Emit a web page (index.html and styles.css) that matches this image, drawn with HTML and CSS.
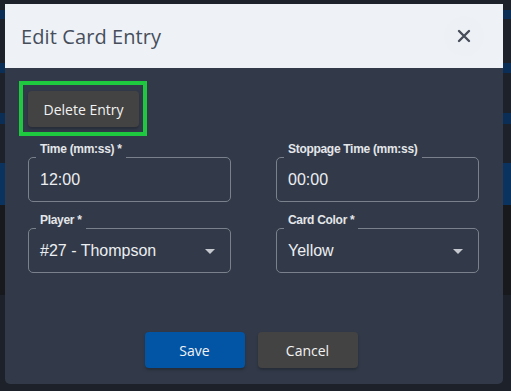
FILE: index.html
```html
<!DOCTYPE html>
<html>
<head>
<meta charset="utf-8">
<link rel="stylesheet" href="styles.css">
</head>
<body>
<div class="backdrop">
  <div class="modal">
    <div class="modal-header">
      <h1 class="modal-title">Edit Card Entry</h1>
      <button class="close-btn" aria-label="Close">
        <svg width="14" height="14" viewBox="0 0 14 14"><path d="M2 2 L12 12 M12 2 L2 12" stroke="#474d59" stroke-width="2.4" stroke-linecap="round"/></svg>
      </button>
    </div>
    <div class="modal-body">
      <div class="delete-row">
        <div class="highlight"><button class="btn btn-dark delete-btn">Delete Entry</button></div>
      </div>
      <div class="grid">
        <div class="field">
          <span class="label">Time (mm:ss) *</span>
          <div class="box"><span class="value">12:00</span></div>
        </div>
        <div class="field">
          <span class="label">Stoppage Time (mm:ss)</span>
          <div class="box"><span class="value">00:00</span></div>
        </div>
        <div class="field">
          <span class="label">Player *</span>
          <div class="box"><span class="value">#27 - Thompson</span><span class="caret"></span></div>
        </div>
        <div class="field">
          <span class="label">Card Color *</span>
          <div class="box"><span class="value">Yellow</span><span class="caret"></span></div>
        </div>
      </div>
      <div class="actions">
        <button class="btn btn-primary">Save</button>
        <button class="btn btn-dark">Cancel</button>
      </div>
    </div>
  </div>
</div>
</body>
</html>
```
FILE: styles.css
```css
* { box-sizing: border-box; }
html, body { margin: 0; padding: 0; }
body {
  width: 511px;
  height: 391px;
  background:
    linear-gradient(to bottom,
      #1d2129 0, #1d2129 10px,
      #0a2e55 10px, #0a2e55 19px,
      #1d2129 19px, #1d2129 63px,
      #0a2e55 63px, #0a2e55 73px,
      #1d2129 73px, #1d2129 113px,
      #0a2e55 113px, #0a2e55 124px,
      #1d2129 124px, #1d2129 163px,
      #0a3360 163px, #0a3360 205px,
      #18191d 205px, #18191d 295px,
      #1d2129 295px);
  overflow: hidden;
  font-family: "Liberation Sans", Arial, sans-serif;
}
.backdrop {
  padding: 4px 8px 0 5px;
}
.modal {
  width: 498px;
  height: 380px;
  border-radius: 0 0 5px 5px;
  background: #323a49;
  overflow: hidden;
}
.modal-header {
  height: 64px;
  background: #eef2f7;
  display: flex;
  align-items: center;
  justify-content: space-between;
  padding: 0 19px 0 16px;
}
.modal-title {
  margin: 0;
  font-family: "Open Sans", sans-serif;
  font-weight: 400;
  font-size: 20px;
  color: #474e5b;
  letter-spacing: 0.1px;
}
.close-btn {
  width: 40px;
  height: 40px;
  border-radius: 50%;
  border: none;
  background: #edf1f6;
  display: flex;
  align-items: center;
  justify-content: center;
  padding: 0;
}
.modal-body {
  padding: 13px 24px 0 14px;
}
.delete-row { height: 60px; }
.highlight {
  display: inline-block;
  border: 4px solid #1ec83f;
  padding: 6px 4px 5px 5px;
}
.btn {
  font-family: "Open Sans", sans-serif;
  font-size: 14px;
  border: none;
  border-radius: 4px;
  color: #f2f2f2;
  height: 36px;
  box-shadow: 0 2px 3px rgba(0,0,0,0.25);
  display: block;
}
.btn-dark { background: #434343; }
.btn-primary { background: #0254a5; }
.delete-btn { width: 111px; }
.grid {
  display: grid;
  grid-template-columns: 203px 203px;
  column-gap: 45px;
  row-gap: 10px;
  margin-left: 9px;
}
.field {
  position: relative;
  padding-top: 16px;
}
.label {
  position: absolute;
  left: 8px;
  top: -1px;
  padding: 0 4px;
  background: #323a49;
  font-size: 12px;
  font-weight: 700;
  color: #e4e6ea;
  line-height: 18px;
  letter-spacing: -0.3px;
  z-index: 1;
}
.box {
  height: 45px;
  border: 1px solid #7b818c;
  border-radius: 5px;
  display: flex;
  align-items: center;
  justify-content: space-between;
  padding: 0 15px 0 11px;
}
.value {
  font-size: 16px;
  color: #eceef1;
}
.caret {
  width: 0;
  height: 0;
  border-left: 5px solid transparent;
  border-right: 5px solid transparent;
  border-top: 5px solid #c5c8ce;
  margin-top: 2px;
}
.actions {
  display: flex;
  justify-content: center;
  gap: 13px;
  margin-top: 59px;
  padding-left: 4px;
}
.actions .btn { width: 100px; }
```
